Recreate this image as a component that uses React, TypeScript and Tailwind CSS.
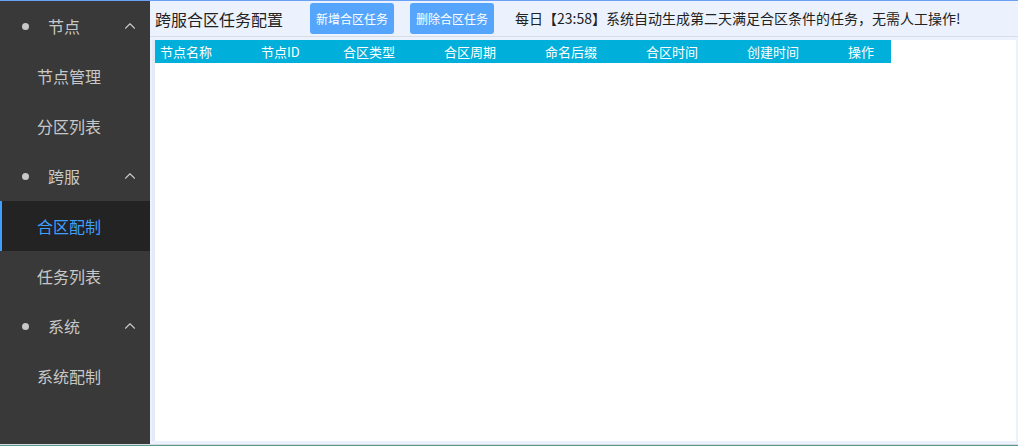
import { ChevronUp } from 'lucide-react'

type MenuItem = { label: string; active?: boolean }
type MenuGroup = { title: string; items: MenuItem[] }

const MENU: MenuGroup[] = [
  { title: '节点', items: [{ label: '节点管理' }, { label: '分区列表' }] },
  { title: '跨服', items: [{ label: '合区配制', active: true }, { label: '任务列表' }] },
  { title: '系统', items: [{ label: '系统配制' }] },
]

const COLUMNS = [
  { label: '节点名称', w: 'w-[101px]' },
  { label: '节点ID', w: 'w-[82px]' },
  { label: '合区类型', w: 'w-[101px]' },
  { label: '合区周期', w: 'w-[101px]' },
  { label: '命名后缀', w: 'w-[101px]' },
  { label: '合区时间', w: 'w-[101px]' },
  { label: '创建时间', w: 'w-[101px]' },
  { label: '操作', w: 'w-[48px]' },
]

function Sidebar() {
  return (
    <aside className="w-[150px] shrink-0 bg-[#393939] h-full">
      {MENU.map((group) => (
        <div key={group.title}>
          <div className="h-[50px] flex items-center pl-[22px] pr-[11px] text-[16px] text-[#c8c8c8]">
            <span className="w-[7px] h-[7px] rounded-full bg-[#c8c8c8]" />
            <span className="ml-[19px] flex-1">{group.title}</span>
            <ChevronUp size={18} strokeWidth={1.5} className="text-[#c8c8c8]" />
          </div>
          {group.items.map((item) =>
            item.active ? (
              <div
                key={item.label}
                className="h-[50px] flex items-center pl-[35px] text-[16px] text-[#409eff] bg-[#232323] border-l-2 border-[#409eff]"
              >
                {item.label}
              </div>
            ) : (
              <div key={item.label} className="h-[50px] flex items-center pl-[37px] text-[16px] text-[#c8c8c8]">
                {item.label}
              </div>
            )
          )}
        </div>
      ))}
    </aside>
  )
}

export default function App() {
  return (
    <div
      className="w-[1018px] h-[446px] flex flex-col overflow-hidden border-t border-[#6aa1f5] bg-[#ebf2fd]"
      style={{ fontFamily: '"Noto Sans CJK SC", "Noto Sans", sans-serif' }}
    >
      <div className="flex flex-1 min-h-0">
        <Sidebar />
        <main className="flex-1 flex flex-col min-w-0">
          <div className="h-[36px] flex items-center pl-[5px] border-b border-[#d8dde4]">
            <h1 className="text-[16px] text-[#222] leading-none">跨服合区任务配置</h1>
            <button className="ml-[27px] w-[84px] h-[31px] rounded-[3px] bg-[#55a5fc] text-white text-[12px]">
              新增合区任务
            </button>
            <button className="ml-[16px] w-[84px] h-[31px] rounded-[3px] bg-[#55a5fc] text-white text-[12px]">
              删除合区任务
            </button>
            <p className="ml-[21px] text-[14px] text-[#222]">
              每日【23:58】系统自动生成第二天满足合区条件的任务，无需人工操作!
            </p>
          </div>
          <div className="flex-1 pt-[3px] pl-[2px] pr-[2px] pb-[3px]">
            <div className="h-full border-l-[3px] border-[#e3ebf7] bg-white">
              <div className="flex h-[23px] w-[736px] items-center bg-[#00b0da] text-white text-[13px]">
                {COLUMNS.map((c) => (
                  <div key={c.label} className={`${c.w} pl-[5px] whitespace-nowrap`}>
                    {c.label}
                  </div>
                ))}
              </div>
            </div>
          </div>
        </main>
      </div>
      <div className="h-[2px] bg-[#d5dbe3] border-b border-[#5b9a8b]" />
    </div>
  )
}
